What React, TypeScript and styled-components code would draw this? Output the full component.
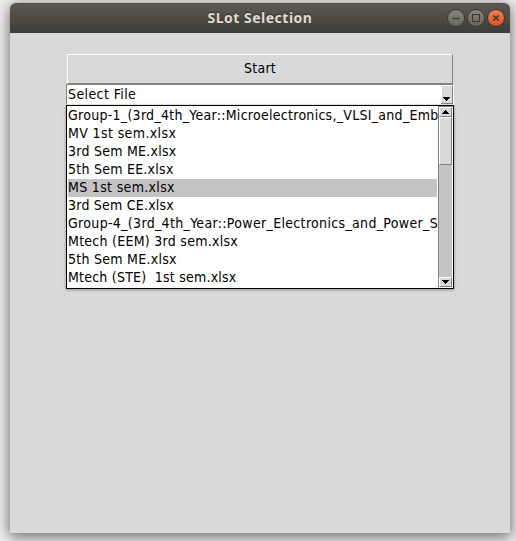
import React from 'react';
import styled, { createGlobalStyle } from 'styled-components';

const GlobalStyle = createGlobalStyle`
  * { box-sizing: border-box; }
  body {
    margin: 0;
    width: 516px;
    height: 541px;
    overflow: hidden;
    background: #f0efed;
    color: #000;
    font: 14px/18px "DejaVu Sans Condensed", "DejaVu Sans", sans-serif;
    font-stretch: condensed;
  }
`;

const Desktop = styled.div`
  height: 541px;
  padding: 3px 6px 8px 10px;
  overflow: hidden;
`;

const Window = styled.main`
  width: 500px;
  height: 530px;
  background: #d9d9d9;
  border-radius: 6px 6px 0 0;
  box-shadow: 0 3px 14px 1px rgba(0, 0, 0, 0.55);
`;

const TitleBar = styled.header`
  display: grid;
  grid-template-columns: 1fr auto 1fr;
  align-items: center;
  height: 30px;
  padding: 0 5px 1px 0;
  border-radius: 6px 6px 0 0;
  border-top: 1px solid #4c4b43;
  background: linear-gradient(#5c5a50, #3d3c37);
`;

const Title = styled.h1`
  grid-column: 2;
  margin: 0 0 0 5px;
  color: #dfdbd2;
  font: bold 14px/20px "Noto Sans", sans-serif;
  letter-spacing: 0.5px;
  text-shadow: 0 -1px 1px #33322e;
`;

const Controls = styled.div`
  display: flex;
  justify-content: flex-end;
  gap: 2px;
`;

const ControlButton = styled.button<{ $close?: boolean }>`
  width: 18px;
  height: 18px;
  padding: 0;
  border: 1px solid #383732;
  border-radius: 50%;
  background: ${({ $close }) =>
    $close ? 'linear-gradient(#f47c54, #e5501f)' : 'linear-gradient(#85847c, #68675f)'};
  svg { display: block; }
`;

const Content = styled.div`
  width: 388px;
  margin: 21px 0 0 56px;
`;

const StartButton = styled.button`
  display: block;
  width: 386px;
  height: 30px;
  margin-left: 1px;
  padding: 0 0 2px;
  border: solid;
  border-width: 1px;
  border-color: #fff #828282 #828282 #fff;
  background: #d9d9d9;
  color: #000;
  font: inherit;
  letter-spacing: 0.25px;
`;

const Combo = styled.div`
  display: flex;
  height: 21px;
  border: 1px solid #828282;
  border-right-color: #fff;
  border-bottom-color: #ededed;
  background: #fff;
`;

const ComboValue = styled.div`
  flex: 1;
  padding-left: 1px;
  letter-spacing: 0.4px;
`;

const ArrowButton = styled.button<{ $w: number; $h: number; $drop: number; $inset: number }>`
  display: flex;
  align-items: flex-start;
  justify-content: flex-start;
  flex: none;
  width: ${({ $w }) => $w}px;
  height: ${({ $h }) => $h}px;
  padding: ${({ $drop, $inset }) => `${$drop}px 0 0 ${$inset}px`};
  border: 1px solid;
  border-color: #fff #828282 #828282 #fff;
  background: #d9d9d9;
  svg { display: block; flex: none; }
`;

const Popup = styled.div`
  display: flex;
  height: 184px;
  border: 1px solid #000;
  background: #fff;
  box-shadow: 0 1px 3px rgba(0, 0, 0, 0.35);
`;

const FileList = styled.ul`
  width: 371px;
  margin: 0;
  padding: 1px;
  list-style: none;
`;

const FileItem = styled.li<{ $active?: boolean; $tracking: number }>`
  height: 18px;
  line-height: 16px;
  white-space: pre;
  letter-spacing: ${({ $tracking }) => $tracking}px;
  background: ${({ $active }) => ($active ? '#c3c3c3' : '#fff')};
`;

const ScrollBar = styled.div`
  display: flex;
  flex-direction: column;
  width: 15px;
  border: solid;
  border-width: 1px;
  border-color: #828282 #fff #fff #828282;
  background: #c3c3c3;
`;

const Thumb = styled.div`
  height: 48px;
  border: 1px solid;
  border-color: #fff #828282 #828282 #fff;
  background: #d9d9d9;
`;

const Track = styled.div`
  flex: 1;
`;

const Triangle = ({ up = false }: { up?: boolean }) => (
  <svg width="7" height="4" viewBox="0 0 7 4" shapeRendering="crispEdges">
    <path d={up ? 'M3 0h1v1h1v1h1v1h1v1H0V3h1V2h1V1h1z' : 'M0 0h7v1H6v1H5v1H4v1H3V3H2V2H1V1H0z'} />
  </svg>
);

const files = [
  { name: 'Group-1_(3rd_4th_Year::Microelectronics,_VLSI_and_Emb', tracking: 0.28 },
  { name: 'MV 1st sem.xlsx', tracking: 0.38 },
  { name: '3rd Sem ME.xlsx', tracking: 0.25 },
  { name: '5th Sem EE.xlsx', tracking: 0.25 },
  { name: 'MS 1st sem.xlsx', tracking: 0.33 },
  { name: '3rd Sem CE.xlsx', tracking: 0.22 },
  { name: 'Group-4_(3rd_4th_Year::Power_Electronics_and_Power_S', tracking: 0.33 },
  { name: 'Mtech (EEM) 3rd sem.xlsx', tracking: 0.27 },
  { name: '5th Sem ME.xlsx', tracking: 0.27 },
  { name: 'Mtech (STE)  1st sem.xlsx', tracking: 0.22 },
];

const controls = [
  { name: 'Minimize', path: 'M4 8.5h8' },
  { name: 'Maximize', path: 'M4.5 4.5h7v7h-7z' },
  { name: 'Close', path: 'M5.5 5.5l5 5M10.5 5.5l-5 5' },
];

export default function App() {
  return (
    <Desktop>
      <GlobalStyle />
      <Window>
        <TitleBar>
          <Title>SLot Selection</Title>
          <Controls>
            {controls.map(({ name, path }) => (
              <ControlButton key={name} aria-label={name} $close={name === 'Close'}>
                <svg width="16" height="16" viewBox="0 0 16 16" fill="none" stroke="#3a3833"
                  strokeWidth={name === 'Close' ? 1.7 : 1.2}>
                  <path d={path} />
                </svg>
              </ControlButton>
            ))}
          </Controls>
        </TitleBar>
        <Content>
          <StartButton>Start</StartButton>
          <Combo>
            <ComboValue>Select File</ComboValue>
            <ArrowButton aria-label="Open file list" $w={12} $h={19} $drop={11} $inset={1}>
              <Triangle />
            </ArrowButton>
          </Combo>
          <Popup>
            <FileList>
              {files.map(({ name, tracking }) => (
                <FileItem key={name} $tracking={tracking} $active={name === 'MS 1st sem.xlsx'}>{name}</FileItem>
              ))}
            </FileList>
            <ScrollBar>
              <ArrowButton aria-label="Scroll up" $w={13} $h={10} $drop={2} $inset={2}><Triangle up /></ArrowButton>
              <Thumb />
              <Track />
              <ArrowButton aria-label="Scroll down" $w={13} $h={10} $drop={2} $inset={2}><Triangle /></ArrowButton>
            </ScrollBar>
          </Popup>
        </Content>
      </Window>
    </Desktop>
  );
}
